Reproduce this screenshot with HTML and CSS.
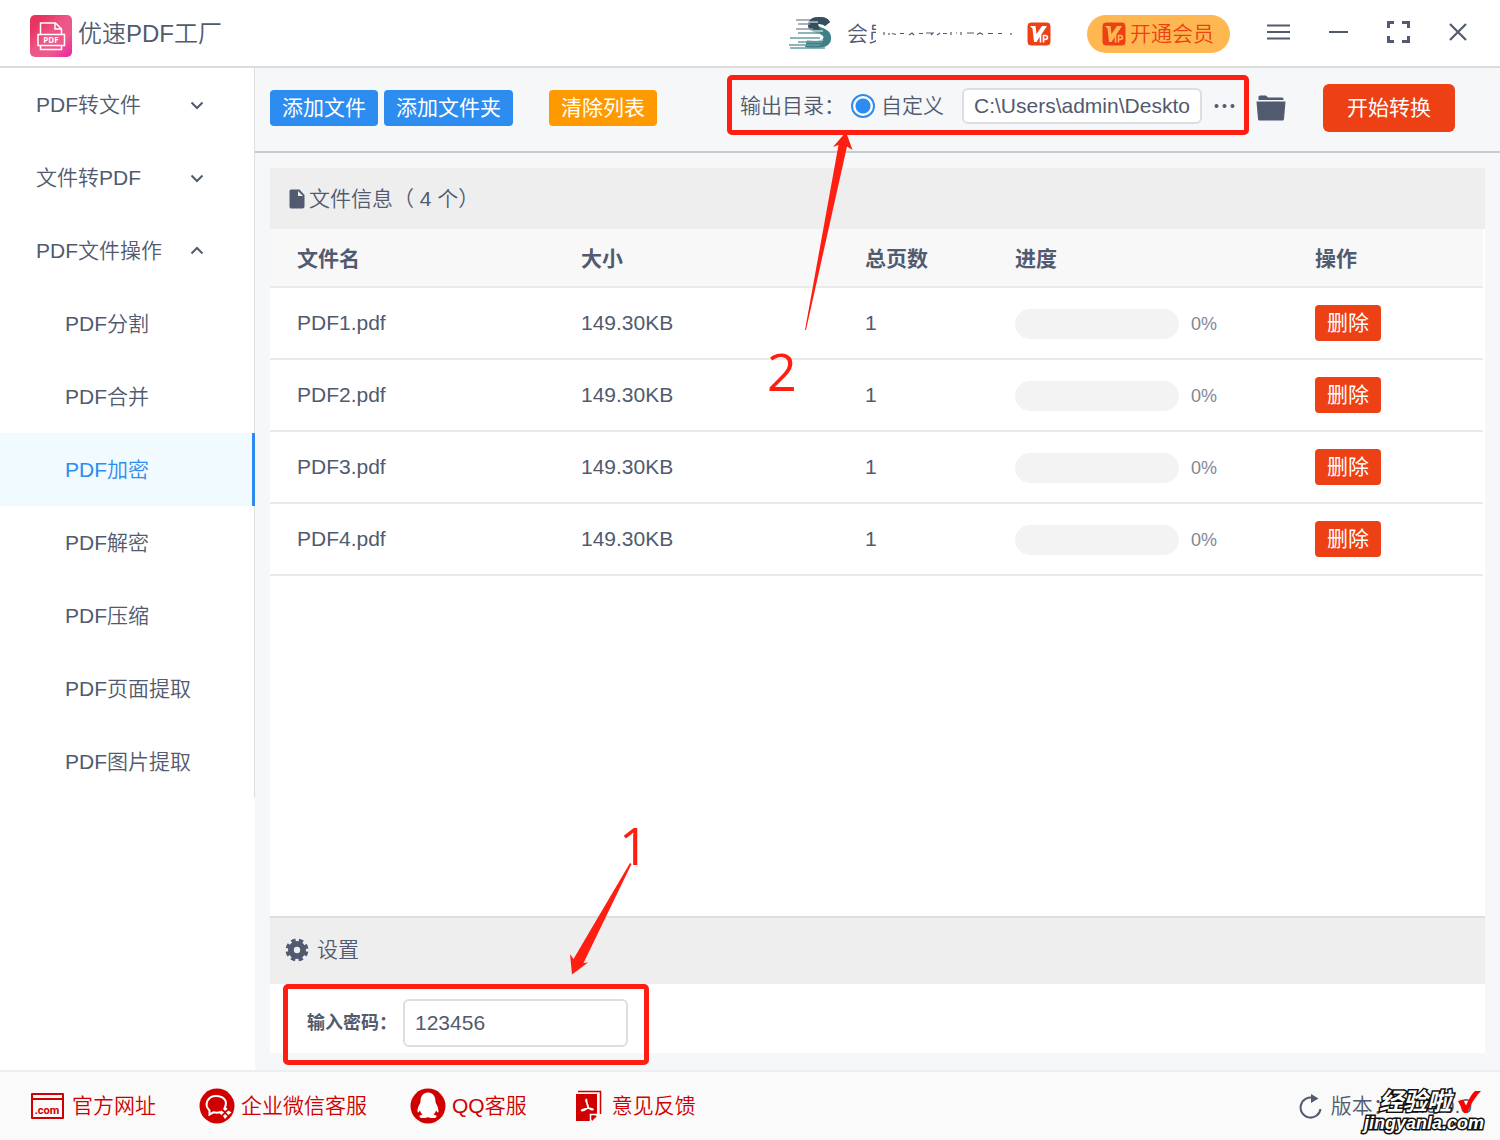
FILE: index.html
```html
<!DOCTYPE html>
<html lang="zh-CN">
<head>
<meta charset="utf-8">
<title>优速PDF工厂</title>
<link rel="stylesheet" href="styles.css">
</head>
<body>
<svg class="defs" width="0" height="0" aria-hidden="true">
  <defs>
    <symbol id="vip" viewBox="0 0 24 24">
      <rect width="24" height="24" rx="4" fill="#ed4014"/>
      <path class="vip-ink" d="M3 4h5.500l1 8L15 4h5L9.500 20H7L5.500 6.500z"/>
      <path class="vip-line" d="M13.500 12.500v8M16.500 20.500v-7h2a1.900 1.900 0 0 1 0 3.900h-2" fill="none" stroke-width="1.600"/>
    </symbol>
    <symbol id="chevron" viewBox="0 0 14 14">
      <path d="M1.500 4.500 7 10l5.500-5.500" fill="none" stroke="currentColor" stroke-width="2"/>
    </symbol>
  </defs>
</svg>

<header class="titlebar">
  <svg class="logo" viewBox="0 0 42 42" aria-hidden="true">
    <defs><linearGradient id="pink" x1="0" y1="0" x2="1" y2="1"><stop offset=".2" stop-color="#e93462"/><stop offset=".45" stop-color="#ec5585"/><stop offset=".7" stop-color="#ec5a8b"/><stop offset="1" stop-color="#ec22a4"/></linearGradient></defs>
    <rect width="42" height="42" rx="5" fill="url(#pink)"/>
    <g fill="none" stroke="#fff" stroke-width="1.500"><path d="M10.500 19V8h15l6 6v5M25 8v6h6.500M8 19.500h26.500v11H8zM10.500 31v3.500h21V31"/></g>
    <text class="logo-text" x="21" y="28" text-anchor="middle">PDF</text>
  </svg>
  <h1 class="title">优速PDF工厂</h1>
  <div class="window-tools">
    <div class="account">
      <svg class="avatar" viewBox="0 0 43 36" aria-hidden="true">
        <path d="M41 6C39 2 35 1 30 1c-7 0-11 3-11 8 0 6 6 7 12 9 4 2 5 4 1 6-3 1-9 1-14 0l-2 7c5 2 20 2 24-3 3-3 3-10-1-13-3-3-10-4-10-6s5-1 7 1z" fill="#3f7f86"/>
        <path d="M41 6C39 2 35 1 30 1c-7 0-11 3-11 8l1 4 11 1-2-5c0-2 5-1 7 1z" fill="#34505e"/>
        <path d="M7 4h14M9 8h12M7 13h17" stroke="#8e98a5" stroke-width="1.500"/>
        <path d="M9 17h22M1 22h30M9 26h24M0 29h31M1 32h35" stroke="#6a9da3" stroke-width="1.500"/>
        <path d="M15 6h14M16 15h18M17 24h17" stroke="#fff" stroke-width="1"/>
      </svg>
      <span class="member">会员</span>
      <svg class="masked" viewBox="0 0 130 4" aria-hidden="true"><path d="M1 0v3M6 3V1M9 1.500l4 1M17 1.500h4M26 3l3-2 2 2M36 1.500h4M43 1h7l-2 2M54 3l3-2M60 1.500h4M68 0v3M73 1h1M78 0v3M84 1h7M94 2.500l3-1.500 3 1.500M105 1.500h5M115 1.500h4M128 1v2" stroke="#515a6e" stroke-width="1.200" fill="none"/></svg>
      <svg class="vip" aria-hidden="true"><use href="#vip"/></svg>
    </div>
    <button class="upgrade"><svg class="vip vip-amber" aria-hidden="true"><use href="#vip"/></svg>开通会员</button>
    <button class="window-btn" aria-label="菜单"><svg viewBox="0 0 24 24"><path d="M1 5.500h23M1 12h23M1 18.500h23" stroke="currentColor" stroke-width="2"/></svg></button>
    <button class="window-btn" aria-label="最小化"><svg viewBox="0 0 24 24"><path d="M3 12h19" stroke="currentColor" stroke-width="2"/></svg></button>
    <button class="window-btn" aria-label="最大化"><svg viewBox="0 0 24 24"><path d="M2.500 8V2.500H8M16 2.500h6.500V8M22.500 16v5.500H16M8 21.500H2.500V16" fill="none" stroke="currentColor" stroke-width="3"/></svg></button>
    <button class="window-btn" aria-label="关闭"><svg viewBox="0 0 24 24"><path d="m4 4 16 16M20 4 4 20" stroke="currentColor" stroke-width="2.200"/></svg></button>
  </div>
</header>

<div class="workspace">
  <aside class="sidebar">
    <nav class="menu">
      <button class="menu-group">PDF转文件<svg class="chevron"><use href="#chevron"/></svg></button>
      <button class="menu-group">文件转PDF<svg class="chevron"><use href="#chevron"/></svg></button>
      <button class="menu-group" aria-expanded="true">PDF文件操作<svg class="chevron chevron-up"><use href="#chevron"/></svg></button>
      <a class="menu-item" href="#split">PDF分割</a>
      <a class="menu-item" href="#merge">PDF合并</a>
      <a class="menu-item active" href="#encrypt">PDF加密</a>
      <a class="menu-item" href="#decrypt">PDF解密</a>
      <a class="menu-item" href="#compress">PDF压缩</a>
      <a class="menu-item" href="#pages">PDF页面提取</a>
      <a class="menu-item" href="#images">PDF图片提取</a>
    </nav>
  </aside>

  <main class="main">
    <div class="toolbar">
      <button class="btn primary">添加文件</button>
      <button class="btn primary">添加文件夹</button>
      <button class="btn warning">清除列表</button>
      <div class="output callout">
        <span>输出目录：</span>
        <input class="radio" type="radio" id="custom" name="target" checked>
        <label class="radio-label" for="custom">自定义</label>
        <input class="field path" type="text" aria-label="输出目录" value="C:\Users\admin\Deskto">
        <button class="more" aria-label="选择目录"><svg viewBox="0 0 22 6"><g fill="currentColor"><circle cx="2.500" cy="3" r="2"/><circle cx="10.500" cy="3" r="2"/><circle cx="18.500" cy="3" r="2"/></g></svg></button>
        <svg class="arrow arrow-output" viewBox="800 130 56 202" aria-hidden="true"><path d="M805 330 838.500 145l-5.500 2 13-15 6.500 18-5.500-3.500L806 330z"/></svg>
        <span class="step step-output">2</span>
      </div>
      <button class="folder" aria-label="打开目录"><svg viewBox="0 0 30 26"><path d="M2.500 5V2q0-1.500 1.500-1.500h6L12 2.500h14q1.500 0 1.500 1.500v1z" fill="currentColor"/><path d="M.500 6.500h29L28 24q-.2 1.500-1.500 1.500h-23Q2.200 25.500 2 24z" fill="currentColor"/></svg></button>
      <button class="btn start">开始转换</button>
    </div>

    <section class="card">
      <h2 class="card-head"><svg class="doc" viewBox="0 0 16 20" aria-hidden="true"><path d="M2 .500h8.500l5 5.500v11.500q0 2-2 2H2q-1.500 0-1.500-2v-15q0-2 1.500-2z" fill="currentColor"/><path d="M9 2v5h5z" fill="#eee"/></svg>文件信息（ 4 个）</h2>
      <div class="list">
        <table class="files">
          <colgroup><col><col><col class="col-pages"><col class="col-progress"><col class="col-action"></colgroup>
          <thead><tr><th>文件名</th><th>大小</th><th>总页数</th><th>进度</th><th>操作</th></tr></thead>
          <tbody>
            <tr><td>PDF1.pdf</td><td>149.30KB</td><td>1</td><td><div class="meter"><progress class="bar" value="0" max="100" aria-label="PDF1.pdf"></progress>0%</div></td><td><button class="btn danger">删除</button></td></tr>
            <tr><td>PDF2.pdf</td><td>149.30KB</td><td>1</td><td><div class="meter"><progress class="bar" value="0" max="100" aria-label="PDF2.pdf"></progress>0%</div></td><td><button class="btn danger">删除</button></td></tr>
            <tr><td>PDF3.pdf</td><td>149.30KB</td><td>1</td><td><div class="meter"><progress class="bar" value="0" max="100" aria-label="PDF3.pdf"></progress>0%</div></td><td><button class="btn danger">删除</button></td></tr>
            <tr><td>PDF4.pdf</td><td>149.30KB</td><td>1</td><td><div class="meter"><progress class="bar" value="0" max="100" aria-label="PDF4.pdf"></progress>0%</div></td><td><button class="btn danger">删除</button></td></tr>
          </tbody>
        </table>
      </div>
      <h2 class="card-head settings-head"><svg class="gear" viewBox="0 0 24 24" aria-hidden="true"><circle cx="12" cy="12" r="9" fill="currentColor"/><circle cx="12" cy="12" r="9" fill="none" stroke="currentColor" stroke-width="5" stroke-dasharray="4 3.069" stroke-dashoffset="-1.500"/><circle cx="12" cy="12" r="3.200" fill="#eee"/></svg>设置</h2>
      <div class="settings">
        <div class="password callout">
          <label class="password-label" for="password">输入密码：</label>
          <input class="field password-field" id="password" type="text" value="123456">
          <svg class="arrow arrow-password" viewBox="568 860 66 116" aria-hidden="true"><path d="m630 863-56.500 96-3.500-5 2 20.500 16-12-4.500.500L631.500 864z"/></svg>
          <span class="step step-password">1</span>
        </div>
      </div>
    </section>
  </main>
</div>

<footer class="footer">
  <a class="foot-link" href="#site"><svg class="foot-icon" viewBox="0 0 36 36" aria-hidden="true"><path d="M2 6h31v24H2zM2 11h31" fill="none" stroke="currentColor" stroke-width="2" stroke-linejoin="round"/><text class="com-text" x="17" y="26" text-anchor="middle">.com</text></svg>官方网址</a>
  <a class="foot-link" href="#wechat"><svg class="foot-icon" viewBox="0 0 36 36" aria-hidden="true"><circle cx="18" cy="18" r="17.500" fill="currentColor"/><path d="M25.500 20c4-7-1-12-8.500-12S4 16 10.500 22.500v4l4-2.200q4 .8 7-.3" fill="none" stroke="#fff" stroke-width="2"/><path d="m26 18 2.500 3-2.500 2-2-2zM32.500 24.500l-3 2.500-2.500-2.500 2.500-2zM26 31l-2-3 2-2 2.500 2zM19.500 24.500l3-2 2.500 2-2.500 2.500z" fill="#fff"/></svg>企业微信客服</a>
  <a class="foot-link" href="#qq"><svg class="foot-icon" viewBox="0 0 36 36" aria-hidden="true"><circle cx="18" cy="18" r="17.500" fill="currentColor"/><path d="M18 4.500c-5 0-7.500 4-7.500 9 0 2-3 5-3 9.500 0 2 1 2 2.500-.500.500 2 1.500 3 2.500 4-2 .500-3 1-3 2 0 2 6.500 2 8.500.500 2 1.500 8.500 1.500 8.500-.500 0-1-1-1.500-3-2 1-1 2-2 2.500-4 1.500 2.500 2.500 2.500 2.500.500 0-4.500-3-7.500-3-9.500 0-5-2.500-9-7.500-9z" fill="#fff"/></svg>QQ客服</a>
  <a class="foot-link" href="#feedback"><svg class="foot-icon" viewBox="0 0 36 36" aria-hidden="true"><path d="M6 6h21v20l-6.500 7H6zM22 33v-5h5z" fill="currentColor"/><path d="M8 3.500h22.500V26" fill="none" stroke="currentColor" stroke-width="1.500"/><path d="M20.500 33v-6.500H27" fill="none" stroke="#fff" stroke-width="1.500"/><path d="M16.500 11.500c-2.500 1 3 5.500 1.500 8-1 2-6 4-6.500 3s7-3.500 11-1.500c2 1-2 1.500-4.500-2-1.500-2-1-6-1.500-7.500z" fill="none" stroke="#fff" stroke-width="1.500"/></svg>意见反馈</a>
  <div class="version"><svg class="refresh" viewBox="0 0 24 26" aria-hidden="true"><path d="M15 5.200A10 10 0 1 0 21.500 16" fill="none" stroke="currentColor" stroke-width="2"/><path d="M12 1v9l7.500-4.500z" fill="currentColor"/></svg>版本：V2.0.0.0
    <div class="watermark"><div class="mark-name">经验啦<svg class="tick" viewBox="0 0 24 24" aria-hidden="true"><path d="m1 11 5-1.500 3 6Q14 4 18 1h6Q16 9 10 23H7z" fill="#f00" stroke="none"/></svg></div><div class="mark-site">jingyanla.com</div></div>
  </div>
</footer>
</body>
</html>
```
FILE: styles.css
```css
:root {
  --ink: #515a6e;
  --blue: #2d8cf0;
  --red: #ed4014;
  --mark: #ff1e12;
  --line: #dcdee2;
}

* { box-sizing: border-box; }

body {
  margin: 0;
  min-height: 100vh;
  display: flex;
  flex-direction: column;
  background: #f5f7f9;
  color: var(--ink);
  font: 350 21px/32px "Liberation Sans", "Noto Sans CJK SC", sans-serif;
}

button, input { font: inherit; color: inherit; }
button { border: 0; padding: 0; background: none; cursor: pointer; white-space: nowrap; }
a { color: inherit; text-decoration: none; }
svg { display: block; flex: none; }
h1, h2 { margin: 0; font-weight: 350; }
.defs { position: absolute; }

/* Title bar */
.titlebar {
  display: flex;
  align-items: center;
  height: 68px;
  padding: 2px 30px 0;
  background: #fff;
  border-bottom: 2px solid #dcdcdc;
}
.logo { width: 42px; height: 42px; margin-top: 4px; }
.logo-text { font: 700 8px "Open Sans", sans-serif; fill: #fff; }
.title { margin-left: 6px; font-size: 24px; }
.window-tools { display: flex; align-items: center; gap: 36px; margin-left: auto; }
.account { display: flex; align-items: center; }
.avatar { width: 43px; height: 36px; margin-right: 15px; }
.member { position: relative; white-space: nowrap; }
.member::after { content: ""; position: absolute; inset: 0 0 0 auto; width: 13px; background: #fff; }
.masked { position: relative; width: 130px; height: 4px; margin: 0 14px 0 -6px; }
.vip { width: 24px; height: 24px; color: #fff; fill: currentColor; stroke: currentColor; }
.vip-ink { stroke: none; }
.vip rect { stroke: none; }
.vip-amber { color: #ffb851; }
.upgrade {
  display: flex;
  align-items: center;
  gap: 4px;
  height: 38px;
  padding: 0 16px 0 15px;
  border-radius: 19px;
  background: #ffb851;
  color: var(--red);
}
.window-btn { width: 24px; height: 24px; margin-bottom: 4px; }

/* Side menu */
.workspace { flex: 1; display: flex; }
.sidebar { flex: none; width: 255px; background: #fff; }
.menu { display: flex; flex-direction: column; border-right: 1px solid var(--line); }
.menu-group, .menu-item { display: flex; align-items: center; height: 73px; }
.menu-group { justify-content: space-between; padding: 0 50px 0 36px; }
.menu-item { padding-left: 65px; }
.menu-item.active {
  margin-right: -1px;
  border-right: 3px solid var(--blue);
  background: #f0faff;
  color: var(--blue);
}
.chevron { width: 14px; height: 14px; }
.chevron-up { transform: rotate(180deg); }

/* Toolbar */
.main { flex: 1; min-width: 0; display: flex; flex-direction: column; }
.toolbar {
  display: flex;
  align-items: center;
  height: 85px;
  padding: 0 45px 4px 15px;
  border-bottom: 2px solid #c8cacd;
}
.btn { height: 36px; padding: 0 12px; border-radius: 4px; color: #fff; font-weight: 400; }
.primary { background: var(--blue); margin-right: 6px; }
.warning { background: #f90; margin-left: 30px; }
.danger { background: var(--red); }
.start { width: 132px; height: 48px; margin-left: 37px; border-radius: 6px; background: var(--red); }
.folder { width: 30px; height: 26px; margin-left: 7px; }
.output {
  display: flex;
  align-items: center;
  height: 60px;
  margin: -6px 0 0 auto;
  padding: 2px 13px 0;
  white-space: nowrap;
}
.radio {
  appearance: none;
  width: 24px;
  height: 24px;
  margin: 0 6px;
  border: 2px solid var(--blue);
  border-radius: 50%;
  background: radial-gradient(circle, var(--blue) 7px, #fff 8px);
}
.radio-label { margin-right: 18px; }
.field { border: 2px solid var(--line); border-radius: 6px; background: #fff; padding: 0 10px; outline: 0; }
.path { width: 240px; height: 36px; }
.more { width: 22px; margin-left: 12px; }

/* Tutorial marks drawn over the window */
.callout { position: relative; z-index: 1; }
.callout::after {
  content: "";
  position: absolute;
  inset: 0;
  border: 5px solid var(--mark);
  border-radius: 5px;
  pointer-events: none;
}
.arrow { position: absolute; fill: var(--mark); pointer-events: none; }
.step { position: absolute; color: var(--mark); font: 400 52px/60px "Open Sans", sans-serif; }
.arrow-output { left: 73px; top: 55px; width: 56px; height: 202px; }
.step-output { left: 40px; top: 266px; }
.arrow-password { left: 285px; top: -124px; width: 66px; height: 116px; }
.step-password { left: 336px; top: -169px; }

/* File list */
.card { flex: 1; display: flex; flex-direction: column; margin: 15px 15px 17px; background: #fff; }
.card-head {
  display: flex;
  align-items: center;
  height: 61px;
  padding-left: 19px;
  background: #eee;
  font-size: 21px;
}
.doc { width: 16px; height: 20px; margin-right: 4px; }
.list { flex: 1; padding-right: 2px; }
.files { width: 100%; table-layout: fixed; border-collapse: separate; border-spacing: 0; }
.col-pages { width: 150px; }
.col-progress { width: 300px; }
.col-action { width: 195px; }
.files th, .files td { padding: 0 0 0 27px; border-bottom: 2px solid #e8eaec; text-align: left; }
.files th { height: 59px; padding-top: 2px; background: #f8f8f9; font-weight: 700; }
.files td { height: 72px; }
.meter { display: flex; align-items: center; gap: 12px; padding-top: 2px; font-size: 18px; color: #808695; }
.bar { appearance: none; width: 164px; height: 30px; border: 0; border-radius: 15px; overflow: hidden; background: #f3f3f3; }
.bar::-webkit-progress-bar { background: #f3f3f3; }
.bar::-webkit-progress-value { background: var(--blue); }

/* Settings */
.settings-head { height: 68px; padding: 0 0 2px 15px; border-top: 2px solid var(--line); }
.gear { width: 24px; height: 24px; margin-right: 8px; }
.settings { height: 69px; padding-left: 13px; display: flex; }
.password { display: flex; align-items: center; padding: 15px 21px 6px 24px; }
.password::after { bottom: -12px; }
.password-label { margin-right: 6px; font-size: 18px; font-weight: 700; }
.password-field { width: 225px; height: 48px; }

/* Footer */
.footer {
  display: flex;
  align-items: center;
  gap: 43px;
  height: 70px;
  padding: 0 28px 1px 30px;
  background: #fafafa;
  border-top: 2px solid #eceef0;
}
.foot-link { display: flex; align-items: center; gap: 6px; color: #d00000; }
.foot-icon { width: 36px; height: 36px; }
.com-text { font: 700 11px "Roboto", sans-serif; fill: currentColor; }
.version { position: relative; display: flex; align-items: center; gap: 8px; margin-left: auto; }
.refresh { width: 24px; height: 26px; }
.watermark {
  position: absolute;
  right: -12px;
  top: 0;
  color: #fff;
  font-weight: 700;
  font-style: italic;
  white-space: nowrap;
  -webkit-text-stroke: 3px #111;
  paint-order: stroke fill;
}
.mark-name { display: flex; gap: 6px; padding-left: 15px; font-size: 24px; line-height: 24px; }
.tick { width: 24px; height: 24px; }
.mark-site { font-size: 18px; line-height: 18px; }
```
